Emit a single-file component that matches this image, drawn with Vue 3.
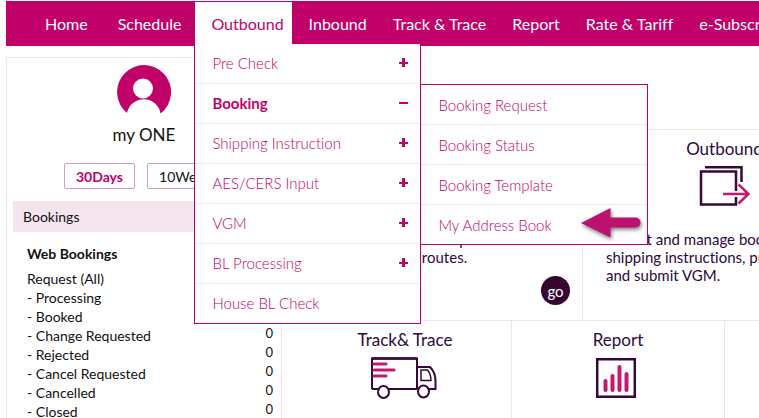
<script setup>
const before = ['Home', 'Schedule']
const after = ['Inbound', 'Track & Trace', 'Report', 'Rate & Tariff', 'e-Subscription']
const menu = [
  { label: 'Pre Check', sign: 'plus' },
  {
    label: 'Booking',
    sign: 'minus',
    children: ['Booking Request', 'Booking Status', 'Booking Template', 'My Address Book'],
  },
  { label: 'Shipping Instruction', sign: 'plus' },
  { label: 'AES/CERS Input', sign: 'plus' },
  { label: 'VGM', sign: 'plus' },
  { label: 'BL Processing', sign: 'plus' },
  { label: 'House BL Check' },
]
const statuses = [
  'Request (All)',
  '- Processing',
  '- Booked',
  '- Change Requested',
  '- Rejected',
  '- Cancel Requested',
  '- Cancelled',
  '- Closed',
]
</script>

<template>
  <div class="page">
    <nav class="nav">
      <ul class="tabs">
        <li v-for="t in before" :key="t"><a href="#" class="tab lead">{{ t }}</a></li>
        <li class="open">
          <a href="#" class="tab active">Outbound</a>
          <ul class="dropdown">
            <li v-for="m in menu" :key="m.label" class="row" :class="{ current: m.children }">
              <a href="#" class="entry top">
                <span>{{ m.label }}</span>
                <svg v-if="m.sign" class="sign" viewBox="0 0 9 9" aria-hidden="true">
                  <path d="M0 4h9v2H0z" />
                  <path v-if="m.sign === 'plus'" d="M3 0h3v9H3z" />
                </svg>
              </a>
              <ul v-if="m.children" class="submenu">
                <li v-for="c in m.children" :key="c" class="row">
                  <a href="#" class="entry">{{ c }}</a>
                </li>
              </ul>
            </li>
          </ul>
        </li>
        <li v-for="t in after" :key="t"><a href="#" class="tab">{{ t }}</a></li>
      </ul>
    </nav>

    <div class="body">
      <aside class="side">
        <svg class="avatar" viewBox="0 0 54 50" aria-hidden="true">
          <path class="fill" d="M10 48A27 27 0 1 1 43.500 48.500A17 17 0 0 0 10 48Z" />
          <circle cx="26" cy="23.500" r="10" fill="#fff" />
        </svg>
        <h2 class="me">my ONE</h2>
        <div class="ranges">
          <button type="button" class="range on">30Days</button>
          <button type="button" class="range">10Weeks</button>
        </div>
        <h3 class="bar">Bookings</h3>
        <h4 class="group">Web Bookings</h4>
        <ul class="statuses">
          <li v-for="s in statuses" :key="s"><span>{{ s }}</span><span class="count">0</span></li>
        </ul>
      </aside>

      <main class="main">
        <div class="cards wide">
          <section class="card">
            <h2 class="title">Schedule</h2>
            <div class="icon"></div>
            <p class="copy">Find all schedules to port<br />for other trade routes.</p>
            <button type="button" class="go">go</button>
          </section>
          <section class="card">
            <h2 class="title">Outbound</h2>
            <svg class="icon" viewBox="0 0 70 42" fill="none" aria-hidden="true">
              <path class="ink" stroke-width="2.500" d="M46 25V5.500H11V38.500H46V31M15 1.200H51.500V16" />
              <path class="pink" stroke-width="2.500" d="M33 28H58M48.500 18.500L58.500 28L48.500 37.500" />
            </svg>
            <p class="copy">Collect and manage bookings,<br />shipping instructions, print BL<br />and submit VGM.</p>
          </section>
        </div>
        <div class="cards">
          <section class="card">
            <h2 class="title">Track&amp; Trace</h2>
            <svg class="icon" viewBox="3 0 70 42" fill="none" aria-hidden="true">
              <path class="ink" stroke-width="2" d="M4 32V1.500H49V32M10 32H4M21 32H49M49 10H62C65 13 67.500 19 67.500 24V32H61" />
              <path class="ink" stroke-width="2.500" d="M4 1.500H49" />
              <path class="ink" stroke-width="1.500" d="M53 13H59.500C62 16 63 20 63 23.500H53Z" />
              <ellipse class="ink" stroke-width="2" cx="15.500" cy="35" rx="5.500" ry="6" />
              <ellipse class="ink" stroke-width="2" cx="55.500" cy="34.500" rx="5.500" ry="6" />
              <path stroke="#999" stroke-width="1.500" d="M1 9H3M1 15H3M1 21H3" />
              <path class="pink" stroke-width="3" stroke-linecap="round" d="M6 7H18M6 13H26M6 19H18" />
            </svg>
          </section>
          <section class="card">
            <h2 class="title">Report</h2>
            <svg class="icon" viewBox="3 0 70 42" fill="none" aria-hidden="true">
              <path class="ink" stroke-width="2.500" d="M16.200 2.200H53.800V39.800H16.200Z" />
              <path class="pink" stroke-width="4" stroke-linecap="round" d="M24.500 24V33M31.500 19V33M38.500 10V33M45.500 17V33" />
            </svg>
          </section>
          <section class="card"></section>
        </div>
      </main>
    </div>

    <svg class="pointer" viewBox="0 0 70 40" aria-hidden="true">
      <path d="M4 19L33.500 4V13.500H58.500A5 5 0 0 1 58.500 23.500H33.500V33.500Z" />
    </svg>
  </div>
</template>

<style>
body {
  margin: 0;
  background: #fff;
}
</style>

<style scoped>
.page {
  position: relative;
  height: 100vh;
  overflow: hidden;
  box-sizing: border-box;
  padding: 1px 0 0 6px;
  font-family: Lato, "Open Sans", sans-serif;
  font-variant-ligatures: none;
  color: #111;
}
ul {
  list-style: none;
  margin: 0;
  padding: 0;
}
h2, h3, h4, p {
  margin: 0;
  font-weight: 400;
}
a {
  text-decoration: none;
  color: inherit;
}
.nav {
  background: #c1006a;
}
.tabs {
  display: flex;
  height: 45px;
  padding-left: 22px;
}
.tab {
  display: block;
  padding: 0 13px;
  line-height: 45px;
  font-size: 16px;
  color: #fff;
  white-space: nowrap;
}
.tab.lead {
  padding: 0 13px 0 17px;
}
.open {
  position: relative;
  margin-right: 4px;
  border: solid #c1006a;
  border-width: 1px 0 0 1px;
}
.tab.active {
  padding: 0 8px 0 16px;
  background: #fff;
  color: #c1006a;
  line-height: 44px;
}
.dropdown {
  position: absolute;
  z-index: 2;
  top: 42px;
  left: -1px;
  width: 225px;
  border: solid #c1006a;
  border-width: 0 1px 1px;
  background: #fff;
}
.row {
  position: relative;
}
.entry {
  display: flex;
  align-items: center;
  justify-content: space-between;
  height: 39px;
  padding: 0 12px 0 17px;
  border-bottom: 1px solid #ececec;
  font-size: 15px;
  font-weight: 300;
  color: #c1006a;
}
.entry.top {
  height: 37px;
  padding-bottom: 2px;
}
.row:last-child > .entry {
  border-bottom: 0;
}
.current > .entry {
  font-weight: 700;
}
.sign {
  width: 9px;
  height: 9px;
  fill: #c1006a;
}
.submenu {
  position: absolute;
  top: 0;
  left: 100%;
  width: 226px;
  border: 1px solid #c1006a;
  background: #fff;
}
.body {
  display: flex;
  gap: 17px;
}
.side {
  flex: 0 0 274px;
  margin-top: 11px;
  border: 1px solid #f3e3ec;
  height: 480px;
}
.avatar {
  display: block;
  width: 54px;
  height: 50px;
  margin: 7px auto 0;
}
.fill {
  fill: #c1006a;
}
.me {
  margin-top: 8px;
  font-size: 17px;
  line-height: 24px;
  text-align: center;
}
.ranges {
  display: flex;
  gap: 12px;
  margin: 16px 0 0 57px;
}
.range {
  height: 26px;
  min-width: 71px;
  padding: 0 11px;
  border: 1px solid #d89abd;
  border-radius: 2px;
  background: #fff;
  font: 400 14px Lato, sans-serif;
  color: #111;
}
.range.on {
  font-weight: 700;
  color: #c1006a;
}
.bar {
  margin: 12px 6px 0;
  padding-left: 10px;
  background: #f3e4ee;
  font-size: 14px;
  line-height: 31px;
}
.group {
  margin: 12px 20px 5px;
  font-size: 14px;
  font-weight: 700;
  line-height: 20px;
}
.statuses {
  margin: 0 8px 0 20px;
  font-size: 14px;
}
.statuses li {
  display: flex;
  justify-content: space-between;
  height: 19px;
  line-height: 19px;
}
.count {
  font-size: 13px;
  line-height: 14px;
}
.main {
  flex: 0 0 auto;
  margin-top: 83px;
  border-top: 1px solid #e8e8e8;
  color: #2b0a3d;
}
.cards {
  display: grid;
  grid-template-columns: repeat(3, 213px);
  height: 190px;
  border-bottom: 1px solid #e8e8e8;
}
.wide {
  grid-template-columns: repeat(2, 284px);
}
.card {
  position: relative;
  border-right: 1px solid #e8e8e8;
}
.title {
  padding-top: 7px;
  font-size: 17px;
  line-height: 24px;
  text-align: center;
}
.icon {
  display: block;
  width: 70px;
  height: 42px;
  margin: 5px auto 0;
}
.cards:not(.wide) .icon {
  margin-left: 72px;
}
.ink {
  stroke: #35093a;
}
.pink {
  stroke: #c31a70;
}
.copy {
  padding: 22px 0 0 23px;
  font-size: 15px;
  line-height: 18px;
  white-space: nowrap;
}
.go {
  position: absolute;
  right: 12px;
  bottom: 15px;
  width: 29px;
  height: 29px;
  padding: 0;
  border: 0;
  border-radius: 50%;
  background: #35052f;
  color: #fff;
  font: 400 15px Lato, sans-serif;
}
.pointer {
  position: absolute;
  z-index: 3;
  left: 577px;
  top: 204px;
  width: 70px;
  height: 40px;
  fill: #bb126f;
  filter: drop-shadow(1px 2px 2px rgba(0, 0, 0, 0.55));
}
</style>
